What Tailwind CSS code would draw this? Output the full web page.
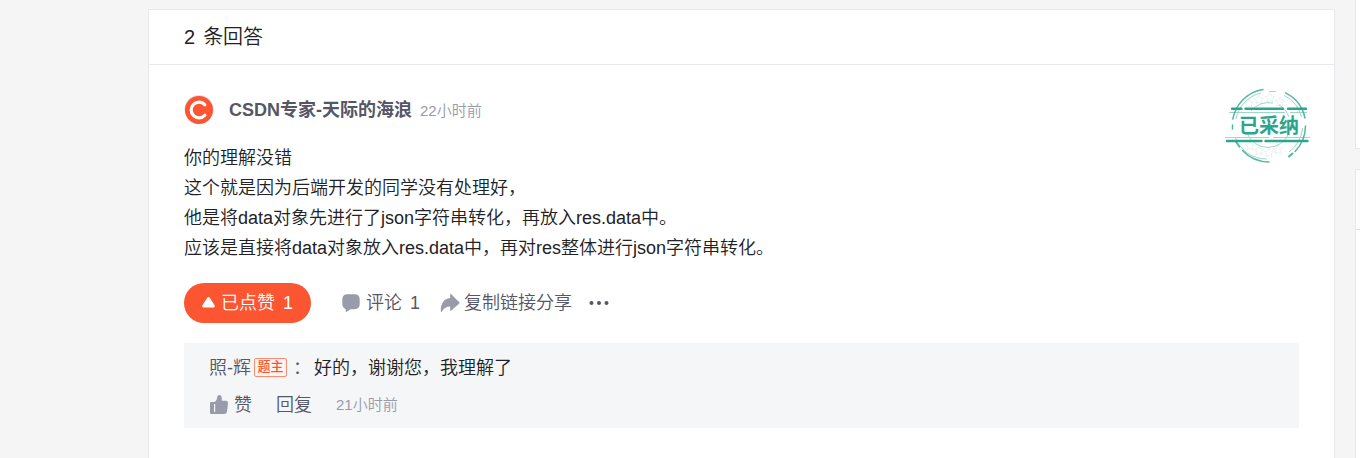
<!DOCTYPE html>
<html lang="zh-CN">
<head>
  <meta charset="UTF-8">
  <meta name="viewport" content="width=device-width, initial-scale=1.0">
  <title>2 条回答</title>
  <script src="https://cdn.jsdelivr.net/npm/@tailwindcss/browser@4"></script>
</head>
<body class="bg-[#f5f5f5] text-[#222226] font-['Liberation_Sans','Noto_Sans_CJK_SC',sans-serif] text-lg font-[350] overflow-hidden">
  <div class="flex min-h-screen pl-37 gap-5">
    <main class="flex-1 mt-[9px] bg-white border border-b-0 border-[#e8e8ed]">
      <h1 class="h-[55px] flex items-center gap-2 px-[35px] text-xl font-[350] border-b border-[#e8e8ed]">
        <span>2</span><span>条回答</span>
      </h1>

      <article class="relative px-[35px] pt-[30px]">
        <!-- Author -->
        <header class="flex items-center h-[30px]">
          <svg class="size-[30px]" viewBox="0 0 30 30" aria-hidden="true">
            <circle cx="15" cy="14.6" r="14.5" fill="#dfdfe6"/>
            <circle cx="15" cy="15" r="14" fill="#fc5531"/>
            <path d="M20.800 9.800A7.800 7.800 0 1 0 20.800 20.200" fill="none" stroke="#fff" stroke-width="3.200" stroke-linecap="round"/>
          </svg>
          <a href="#" class="ml-[15px] font-bold text-[#555666]">CSDN专家-天际的海浪</a>
          <time class="ml-2 pt-[2px] text-[15px] text-[#999aaa]">22小时前</time>
        </header>

        <!-- Accepted stamp -->
        <svg class="absolute top-[20px] right-[23px] w-[88px] h-[80px]" viewBox="0 0 88 80" fill="none" stroke="#2ba58b" role="img" aria-label="已采纳">
          <g stroke-width="1.500" stroke-linecap="round" opacity=".8">
            <path d="M9.800 34A36.500 36.500 0 0 1 40 4.500"/>
            <path d="M62.500 7.800A36.500 36.500 0 0 1 82 33"/>
            <path d="M82.500 41A36.500 36.500 0 0 1 72 66.500"/>
            <path d="M69.500 68.500L66 71.500" stroke-width="2"/>
            <path d="M46 77A36.500 36.500 0 0 1 19.500 65.500"/>
            <path d="M16.500 62L13 57"/>
            <path d="M9.500 40V44"/>
          </g>
          <g stroke-width="1" opacity=".45">
            <path d="M13 34A33.500 33.500 0 0 1 38 8"/>
            <path d="M46 6.500H53"/>
            <path d="M61.500 10.500A33.500 33.500 0 0 1 78.500 32"/>
            <path d="M79.500 43A33.500 33.500 0 0 1 66 67"/>
            <path d="M44 74A33.500 33.500 0 0 1 12 52"/>
            <path d="M28 26A22.500 22.500 0 0 1 50 18"/>
            <path d="M56 20A22.500 22.500 0 0 1 66 32"/>
            <path d="M24 48A22.500 22.500 0 0 0 66 48"/>
            <path d="M6 27.500H62M67 27.500H84M2 52.500H46M50 52.500H87"/>
          </g>
          <g stroke-width=".8" opacity=".14">
            <path id="star" d="M36 10l1.500 3 3.200.4-2.400 2.200.7 3.200-3-1.600-3 1.600.7-3.200-2.400-2.200 3.200-.4z"/>
            <use href="#star" x="11" y="-2"/>
            <use href="#star" x="21" y="2"/>
            <use href="#star" x="-10" y="4"/>
            <use href="#star" x="0" y="51"/>
            <use href="#star" x="10" y="53"/>
            <use href="#star" x="19" y="50"/>
            <use href="#star" x="-9" y="46"/>
          </g>
          <path d="M9 23.800H18.500M22.500 23.800H60M65 23.800H83M4 56H38.500M42.500 56H84.500" stroke-width="2.400" stroke-linecap="round"/>
          <text x="16" y="47.500" font-size="20" font-weight="700" fill="#2ba58b" stroke="none">已采纳</text>
        </svg>

        <div class="mt-[18px] leading-[30px]">
          <p>你的理解没错</p>
          <p>这个就是因为后端开发的同学没有处理好，</p>
          <p>他是将data对象先进行了json字符串转化，再放入res.data中。</p>
          <p>应该是直接将data对象放入res.data中，再对res整体进行json字符串转化。</p>
        </div>

        <!-- Actions -->
        <div class="mt-5 flex items-center text-[#555666]">
          <button class="flex items-center h-10 px-[18px] rounded-full bg-[#fc5531] text-white">
            <svg class="w-[13px] h-3 mr-[6px]" viewBox="0 0 13 12" fill="#fff" aria-hidden="true">
              <path d="M5.400.6Q6.500-.6 7.600.6L12.700 8.500Q13.300 10.300 11.500 10.500H1.500Q-.3 10.300.3 8.500Z"/>
            </svg>
            <span>已点赞</span><span class="ml-2">1</span>
          </button>
          <button class="flex items-center ml-[31px]">
            <svg class="size-[18px] mr-[6px]" viewBox="0 0 18 18" fill="#999aaa" aria-hidden="true">
              <path d="M5.500.3H12.500Q17.700.3 17.700 5.500V10Q17.700 15.200 12.500 15.200H8.500Q6.500 16.700 4.200 18Q3.600 18 3.700 17.300V14.900Q.3 13.800.3 10V5.500Q.3.3 5.500.3Z"/>
            </svg>
            <span>评论</span><span class="ml-2">1</span>
          </button>
          <button class="flex items-center ml-5">
            <svg class="size-5 mr-1" viewBox="0 0 20 20" fill="#999aaa" aria-hidden="true">
              <path d="M10.200 1.300Q10.200.4 11 1L19.300 9.200Q19.800 9.800 19.300 10.400L11 17.700Q10.200 18.300 10.200 17.400V13.600C6.500 13.500 3.500 15.500 1.700 18.900Q1 19.200.8 18.300C.7 10.500 4 5.500 10.200 5Z"/>
            </svg>
            <span>复制链接分享</span>
          </button>
          <button class="ml-[17px]" aria-label="更多">
            <svg class="w-5 h-1" viewBox="0 0 20 4" fill="#555666">
              <circle cx="2.500" cy="2" r="2"/><circle cx="10" cy="2" r="2"/><circle cx="17.500" cy="2" r="2"/>
            </svg>
          </button>
        </div>

        <!-- Comments -->
        <section class="mt-5 px-[25px] pt-[6px] pb-[5px] bg-[#f5f6f7]">
          <div class="flex items-center h-[37px]">
            <a href="#" class="text-[#555666]">照-辉</a>
            <span class="ml-[3px] h-[19px] w-[33px] flex items-center justify-center rounded-xs border border-[#fc8b73] bg-[#fff4f1] text-[13px] font-medium text-[#fc5531]">题主</span>
            <span class="ml-[6px] text-[#555666]">：</span>
            <p class="ml-[3px]">好的，谢谢您，我理解了</p>
          </div>
          <div class="flex items-center h-[37px] text-[#555666]">
            <button class="flex items-center">
              <svg class="w-5 h-[19px] mr-[5px]" viewBox="0 0 20 19" fill="#999aaa" aria-hidden="true">
                <path fill-rule="evenodd" d="M2.300 7H5.500Q7.800 6 8.200 2Q8.500 0 10.300 0Q12.800.3 12.800 3.500V5.800H17Q19.300 6 19 8.500L18 16.500Q17.600 19 15.200 19H2.300Q1 19 1 17.700V8.300Q1 7 2.300 7ZM5 9V17H6.200V9Z"/>
              </svg>
              <span>赞</span>
            </button>
            <button class="ml-6">回复</button>
            <time class="ml-6 text-[15px] text-[#999aaa]">21小时前</time>
          </div>
        </section>
      </article>
    </main>

    <!-- Sidebar edge -->
    <aside class="w-[5px] flex flex-col gap-5">
      <div class="h-[149px] bg-white border-l border-b border-[#e8e8ed]"></div>
      <div class="flex-1 bg-white border-l border-t border-[#e8e8ed]">
        <div class="h-[60px] bg-[#fcfcfc] border-b border-[#e0e0e0]"></div>
      </div>
    </aside>
  </div>
</body>
</html>
